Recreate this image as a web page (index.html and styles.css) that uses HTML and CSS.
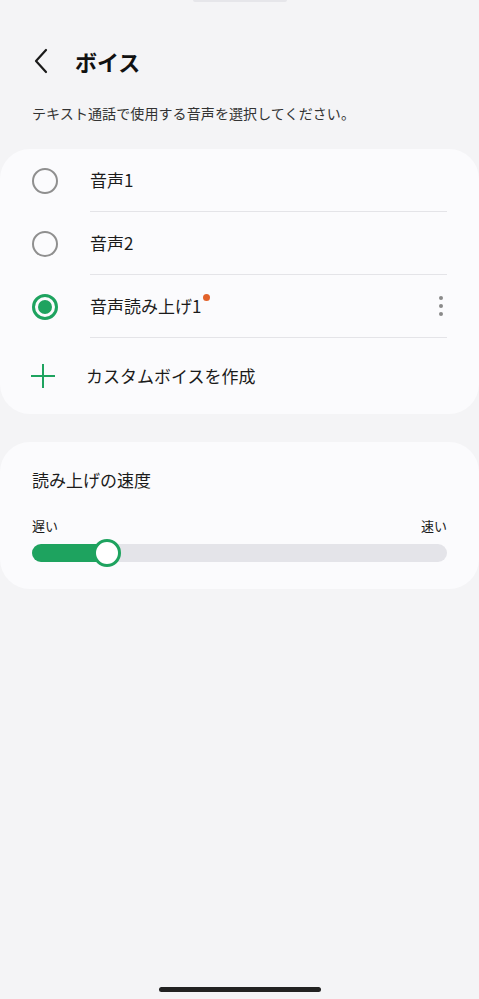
FILE: index.html
```html
<!DOCTYPE html>
<html lang="ja">
<head>
<meta charset="utf-8">
<link rel="stylesheet" href="styles.css">
</head>
<body>
<div class="screen">
  <div class="topbar"></div>
  <header class="header">
    <svg class="back" width="16" height="26" viewBox="0 0 16 26"><path d="M13 2 L3 13 L13 24" fill="none" stroke="#1a1a1a" stroke-width="2.2" stroke-linecap="round" stroke-linejoin="round"/></svg>
    <h1 class="title">ボイス</h1>
  </header>
  <p class="desc">テキスト通話で使用する音声を選択してください。</p>

  <section class="card voices">
    <div class="row">
      <span class="radio"></span>
      <div class="label-wrap"><span class="label">音声1</span></div>
    </div>
    <div class="row">
      <span class="radio"></span>
      <div class="label-wrap"><span class="label">音声2</span></div>
    </div>
    <div class="row">
      <span class="radio on"></span>
      <div class="label-wrap"><span class="label">音声読み上げ1<span class="dot"></span></span>
        <span class="more"><i></i><i></i><i></i></span>
      </div>
    </div>
    <div class="row add">
      <svg class="plus" width="24" height="24" viewBox="0 0 24 24"><path d="M12 0 V24 M0 12 H24" stroke="#1ea35f" stroke-width="2"/></svg>
      <span class="label">カスタムボイスを作成</span>
    </div>
  </section>

  <section class="card speed">
    <div class="speed-title">読み上げの速度</div>
    <div class="ends"><span>遅い</span><span>速い</span></div>
    <div class="track">
      <div class="fill"></div>
      <div class="thumb"></div>
    </div>
  </section>

  <div class="spacer"></div>
  <div class="home"></div>
</div>
</body>
</html>
```
FILE: styles.css
```css
* { box-sizing: border-box; margin: 0; padding: 0; }
html, body { width: 479px; height: 999px; background: #f4f4f6; }
body { font-family: "Noto Sans CJK JP", "Noto Sans", sans-serif; color: #1b1b1b; }
.screen { display: flex; flex-direction: column; height: 999px; }
.topbar { width: 94px; height: 2px; background: #e6e6ea; margin: 0 auto; border-radius: 0 0 2px 2px; }
.header { display: flex; align-items: center; height: 30px; margin-top: 44px; padding-left: 33px; }
.back { display: block; }
.title { font-size: 22px; font-weight: 700; margin-left: 26px; line-height: 30px; color: #111; }
.desc { font-size: 14px; color: #333; margin-top: 27px; padding-left: 32px; line-height: 20px; letter-spacing: 0.1px; }
.card { background: #fbfbfd; border-radius: 30px; }
.voices { margin-top: 26px; padding: 0 32px 0 32px; }
.row { display: flex; align-items: stretch; height: 63px; }
.row .radio { flex: none; align-self: center; width: 26px; height: 26px; border-radius: 50%; border: 2px solid #8f8f8f; }
.row .radio.on { border: 3px solid #1ea35f; display: flex; align-items: center; justify-content: center; }
.row .radio.on::after { content: ""; width: 14px; height: 14px; border-radius: 50%; background: #1ea35f; }
.label-wrap { flex: 1; margin-left: 32px; display: flex; align-items: center; justify-content: space-between; border-bottom: 1px solid #e4e4e8; }
.label { font-size: 17px; color: #1b1b1b; position: relative; line-height: 24px; }
.dot { position: absolute; right: -9px; top: 0px; width: 7px; height: 7px; border-radius: 50%; background: #e2622a; }
.more { display: flex; flex-direction: column; gap: 4px; margin-right: 4px; }
.more i { display: block; width: 4px; height: 4px; border-radius: 50%; background: #8a8a8a; }
.row.add { height: 76px; align-items: center; padding-bottom: 1px; }
.plus { flex: none; margin-left: -1px; }
.row.add .label { margin-left: 31px; }
.speed { margin-top: 28px; padding: 26px 32px 27px; }
.speed-title { font-size: 17px; line-height: 24px; }
.ends { display: flex; justify-content: space-between; font-size: 13px; margin-top: 25px; line-height: 18px; }
.track { position: relative; height: 18px; border-radius: 9px; background: #e4e4e9; margin-top: 9px; }
.fill { width: 80px; height: 18px; border-radius: 9px; background: #1ea35f; }
.thumb { position: absolute; left: 61px; top: -5px; width: 28px; height: 28px; border-radius: 50%; background: #fff; border: 3px solid #1ea35f; }
.spacer { flex: 1; }
.home { width: 162px; height: 5px; border-radius: 3px; background: #222; margin: 0 auto 7px; }
```
